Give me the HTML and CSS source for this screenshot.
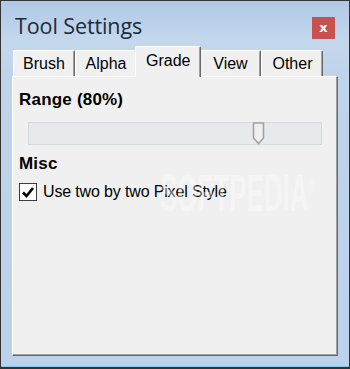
FILE: index.html
```html
<!DOCTYPE html>
<html lang="en">

<head>
    <meta charset="UTF-8">
    <meta name="viewport" content="width=device-width, initial-scale=1.0">
    <title>Tool Settings</title>
    <link rel="stylesheet" href="styles.css">
</head>

<body>
    <div class="window">
        <div class="titlebar">
            <h1 class="title">Tool Settings</h1>
            <button class="close">x</button>
        </div>
        <div class="tabs">
            <div class="tab">Brush</div>
            <div class="tab">Alpha</div>
            <div class="tab tab_active">Grade</div>
            <div class="tab">View</div>
            <div class="tab">Other</div>
        </div>
        <div class="panel">
            <h2 class="label">Range (80%)</h2>
            <div class="track">
                <svg class="thumb" style="left: 223px" width="13" height="23" viewBox="0 0 13 23">
                    <path d="M1.5 1 H11.5 V16 L6.5 21.5 L1.5 16 Z" fill="#f0f0f0" stroke="#a3a3a3" stroke-width="1.6" />
                </svg>
            </div>
            <h2 class="label label_misc">Misc</h2>
            <div class="check_row">
                <span class="checkbox">
                    <svg width="16" height="16" viewBox="0 0 16 16">
                        <path d="M3 8.5 L6.5 12 L13 4" fill="none" stroke="#000" stroke-width="2.6" />
                    </svg>
                </span>
                <span class="check_text">Use two by two Pixel Style</span>
            </div>
            <span class="watermark">SOFTPEDIA<sup>®</sup></span>
        </div>
    </div>
</body>

</html>
```

FILE: styles.css
```css
* {
    box-sizing: border-box;
    margin: 0;
    padding: 0;
}

body {
    width: 350px;
    height: 369px;
    overflow: hidden;
    font-family: 'Liberation Sans', Arial, sans-serif;
    color: #000;
}

.window {
    width: 350px;
    height: 369px;
    display: flex;
    flex-direction: column;
    border: 1px solid #333;
    border-bottom-width: 2px;
    padding: 0 11px 11px 11px;
    background: linear-gradient(#aec8e5, #c4d8ed 40px, #bfd4eb 70px, #bcd2ea);
    box-shadow: inset 0 -1px #7dcff0;
}

.titlebar {
    height: 45px;
    display: flex;
    align-items: center;
    justify-content: space-between;
    padding: 0 3px 0 3px;
}

.title {
    font-family: 'Open Sans', sans-serif;
    font-weight: normal;
    font-size: 21.5px;
    color: #1d2a3a;
    margin-top: 4px;
    letter-spacing: -0.1px;
}

.close {
    width: 23px;
    height: 22px;
    margin-top: 9px;
    border: none;
    background: #c75050;
    color: #fff;
    font-family: 'DejaVu Sans', sans-serif;
    font-weight: bold;
    font-size: 13px;
    line-height: 18px;
}

.tabs {
    height: 30px;
    display: flex;
    align-items: flex-end;
    padding-left: 1px;
}

.tab {
    height: 26px;
    min-width: 62px;
    padding: 0 8px;
    text-align: center;
    font-size: 16px;
    line-height: 26px;
    background: #f0f0f0;
    border-top: 1px solid #fff;
    border-left: 1px solid #fff;
    border-right: 1px solid #696969;
    box-shadow: inset -1px 0 #a0a0a0;
    border-radius: 2px 2px 0 0;
}

.tab_active {
    height: 31px;
    margin: 0 -2px -1px;
    padding: 1px 10px 0;
    position: relative;
    z-index: 1;
}

.panel {
    position: relative;
    flex: 1;
    background: #f0f0f0;
    border-top: 1px solid #fff;
    border-left: 1px solid #fff;
    border-right: 1px solid #696969;
    border-bottom: 1px solid #696969;
    box-shadow: inset -1px -1px #a0a0a0;
    padding: 13px 6px 0;
    overflow: hidden;
}

.label {
    font-size: 17px;
    line-height: 20px;
    font-weight: bold;
    letter-spacing: 0.2px;
}

.track {
    position: relative;
    width: 294px;
    height: 23px;
    margin: 12px 0 0 9px;
    background: #e7eaea;
    border: 1px solid #d6d9d9;
}

.thumb {
    position: absolute;
    top: -1px;
}

.label_misc {
    margin-top: 9px;
}

.check_row {
    display: flex;
    align-items: center;
    gap: 6px;
    margin-top: 9px;
    height: 18px;
}

.checkbox {
    width: 18px;
    height: 18px;
    border: 1px solid #3c3c3c;
    background: #fdfdfd;
    display: flex;
    align-items: center;
    justify-content: center;
}

.check_text {
    font-size: 16px;
    line-height: 18px;
    letter-spacing: -0.15px;
}

.watermark {
    position: absolute;
    left: 147px;
    top: 86px;
    font-size: 52px;
    font-weight: bold;
    color: rgba(255, 255, 255, 0.4);
    transform: scaleX(0.5);
    transform-origin: left top;
    pointer-events: none;
}

.watermark sup {
    font-size: 18px;
    font-weight: normal;
}
```
